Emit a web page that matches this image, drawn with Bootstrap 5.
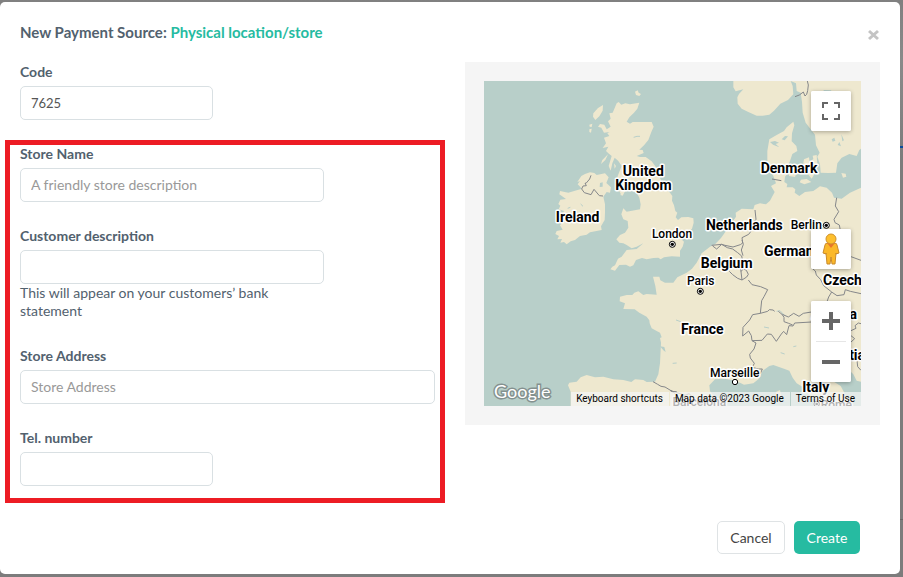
<!DOCTYPE html>
<html lang="en">
<head>
<meta charset="utf-8">
<meta name="viewport" content="width=device-width, initial-scale=1">
<title>New Payment Source</title>
<link href="https://cdn.jsdelivr.net/npm/bootstrap@5.3.0/dist/css/bootstrap.min.css" rel="stylesheet">
<style>
body{background:linear-gradient(#0a4a9c,#0a4a9c) 100% 146px/10px 2px no-repeat,linear-gradient(#666,#666) 100% 519px/10px 1px no-repeat,linear-gradient(#808080,#8a8a8a 60px,#7c7c7c 160px,#7c7c7c);font-family:Lato,sans-serif;font-size:14px;line-height:18px;color:#52616e;min-height:100vh;padding:2px 3px 2px 0}
.dialog-box{border:0;border-radius:5px;padding:0 20px 20px}
.dialog-head{height:60px;padding-top:20px}
.dialog-title{font-size:15px;line-height:20px;font-weight:700;color:#52616e;margin:0}
.dialog-title span{color:#26bba1}
.dismiss{border:0;background:none;padding:0;width:14px;height:14px;line-height:0;margin-top:6px}
.two-up{--bs-gutter-x:30px}
.form-label{font-weight:700;line-height:18px;margin-bottom:5px;display:block}
.form-control{font-size:13px;line-height:18px;height:34px;padding:7px 10px;border-color:#d9e0e3;border-radius:5px;color:#555}
.form-control::placeholder{color:#999;font-size:14px}
.field{margin-bottom:25px}
.field-first{padding-top:1px;margin-bottom:20px}
.w-short{max-width:193px}
.w-mid{max-width:304px}
.hint{max-width:260px;padding-bottom:2px}
.highlight{border:5px solid #ed1c24;margin:0 -10px 0 -15px;padding:0 5px 12px 10px}
.map-panel{background:#f5f5f5;padding:19px}
.map-view{height:325px;background:#b8cfc9;font-family:Roboto,sans-serif}
.map-view>svg{width:100%;height:100%;display:block}
.map-tools{top:10px;right:10px;bottom:24px;width:40px}
.map-btn{border:0;background:#fff;width:40px;height:40px;padding:0;display:flex;align-items:center;justify-content:center}
.map-card{background:#fff;border-radius:2px;box-shadow:0 1px 4px rgba(0,0,0,.3);overflow:hidden}
.map-person{margin-bottom:32px}
.map-rule{height:1px;margin:0 5px;background:#e6e6e6}
.map-legal{right:0;bottom:0;font-size:10px;line-height:14px;gap:1px}
.map-legal>*{background:rgba(245,245,245,.72);color:#000;border:0;padding:0 6px 0 5px;text-decoration:none;line-height:14px}
.country{font-size:42px;font-weight:700}
.city{font-size:36px;font-weight:500}
.map-names text{stroke:#fff;stroke-width:9px;stroke-linejoin:round;paint-order:stroke}
.map-logo{left:10px;bottom:3px;font:400 18px/24px Lato,sans-serif;color:#fff;-webkit-text-stroke:3px #84918f;paint-order:stroke fill}
.actions{padding:18px 20px 0 0;gap:9px}
.actions .btn{font-size:14px;line-height:18px;height:33px;padding:6px 11px;border-radius:5px}
.btn-plain{border:1px solid #dfe3e5;color:#444;background:#fff;width:68px}
.btn-make{background:#26bba1;color:#fff;width:66px}
</style>
<script src="https://cdn.jsdelivr.net/npm/bootstrap@5.3.0/dist/js/bootstrap.bundle.min.js"></script>
</head>
<body>
<main class="modal-content dialog-box bg-white">
  <header class="dialog-head d-flex justify-content-between align-items-start">
    <h1 class="dialog-title">New Payment Source: <span>Physical location/store</span></h1>
    <button type="button" class="dismiss" aria-label="Close"><svg width="14" height="14" viewBox="0 0 14 14"><path d="M3 3l9 8M12 3l-9 8" stroke="#c4c4c4" stroke-width="3"/></svg></button>
  </header>
  <form>
    <div class="row two-up">
      <div class="col-6">
        <div class="field-first">
          <label class="form-label" for="code">Code</label>
          <input class="form-control w-short" id="code" value="7625">
        </div>
        <div class="highlight">
          <div class="field">
            <label class="form-label" for="name">Store Name</label>
            <input class="form-control w-mid" id="name" placeholder="A friendly store description">
          </div>
          <div class="field">
            <label class="form-label" for="desc">Customer description</label>
            <input class="form-control w-mid" id="desc" aria-describedby="hint">
            <div class="hint" id="hint">This will appear on your customers’ bank statement</div>
          </div>
          <div class="field">
            <label class="form-label" for="addr">Store Address</label>
            <input class="form-control" id="addr" placeholder="Store Address">
          </div>
          <div>
            <label class="form-label" for="tel">Tel. number</label>
            <input class="form-control w-short" id="tel" type="tel">
          </div>
        </div>
      </div>
      <div class="col-6">
        <div class="map-panel">
          <div class="map-view position-relative overflow-hidden">
            <svg viewBox="12 15 1131 975" preserveAspectRatio="xMidYMid slice" role="img" aria-label="Map of western Europe">
              <g fill="#eee8cf">
                <path d="M410 82L416 78L424 86L436 82L450 85L478 80L472 98L462 110L448 124L440 137L450 143L458 138L515 138L521 152L514 168L505 192L492 208L478 221L488 222L491 231L470 240L480 243L497 243L515 256L530 276L537 300L552 330L570 350L577 360L576 374L582 388L586 405L592 410L587 424L594 432L604 424L625 423L640 427L641 440L636 458L622 472L618 484L604 490L612 497L608 512L600 524L600 542L575 541L552 544L542 550L535 545L520 546L500 550L486 546L468 552L460 568L450 572L438 566L418 567L405 584L391 580L397 572L405 568L414 548L425 542L440 522L470 519L490 502L470 512L455 517L440 507L430 502L418 500L409 490L420 477L435 470L445 455L443 435L430 430L424 415L430 397L440 407L480 400L482 385L478 365L470 350L440 338L430 345L424 357L415 340L410 330L413 300L425 270L415 255L404 245L397 262L392 284L386 270L395 240L385 232L378 225L385 212L368 216L378 202L372 185L388 180L382 172L389 168L372 170L364 155L354 152L360 144L373 146L380 160L392 152L384 136L392 128L388 112L398 110Z"/>
                <path d="M340 112L354 96L369 87L368 104L358 121L346 132L339 122ZM328 146L337 143L335 153L329 152ZM328 160L335 158L333 170L328 168ZM465 47L473 43L476 50L483 54L478 60L468 57ZM384 235L376 252L363 264L367 252ZM402 262L408 270L404 278ZM428 345L436 344L428 359L421 357Z"/>
                <path d="M293 325L300 315L292 318L304 300L315 294L330 289L343 291L350 297L375 292L386 304L379 321L393 334L390 350L380 348L370 362L375 385L375 410L374 432L363 451L365 462L330 469L320 476L300 480L285 492L272 496L260 505L252 498L241 500L246 489L232 490L237 480L226 474L230 465L248 461L240 448L256 428L240 425L252 405L236 400L241 389L235 384L241 371L258 369L238 355L240 345L265 350L285 344L306 338Z"/>
                <path d="M760 15L760 34L767 46L790 40L777 54L772 64L773 83L785 98L805 108L830 119L848 119L868 116L882 104L901 83L924 72L940 55L938 30L932 15Z"/>
                <path d="M932 15L948 22L950 45L962 50L966 78L968 110L977 140L992 160L1005 176L1008 208L1019 230L1012 242L1020 265L1022 290L1045 291L1068 290L1072 262L1085 245L1108 234L1130 240L1138 222L1143 218V15Z"/>
                <path d="M940 137L943 148L936 172L935 196L949 210L952 225L937 234L930 255L924 268L926 288L915 302L913 318L922 324L920 334L938 334L946 340L944 350L958 360L975 348L1000 345L1020 331L1040 335L1056 350L1062 365L1085 368L1110 350L1143 335V917L1130 914L1120 895L1110 885L1060 870L1042 890L1050 910L1082 930L1097 958L1114 990H1017L1004 970L985 955L973 936L950 922L938 905L928 884L912 878L880 867L868 870L848 884L835 910L820 922L792 926L780 920L755 912L733 908L705 910L688 928L690 946L702 960L680 975L640 990H272L272 947L264 928L268 920L290 917L302 904L320 897L345 904L370 902L400 910L430 912L454 918L465 910L490 912L500 918L525 917L535 895L540 862L543 800L540 786L545 784L540 770L530 765L515 757L509 742L508 733L500 722L478 710L464 700L430 699L435 682L419 676L420 662L440 657L457 657L463 650L475 646L490 657L500 654L530 656L526 630L519 602H538L541 613L555 620H580L592 604L620 590L636 578L650 560L665 532L690 512L705 505L723 486L745 455L768 422L767 410L785 398L820 400L824 387L840 382L858 385L870 374L884 348L873 330L888 322L880 300L868 282L862 262L862 225L868 190L890 177L912 165L920 154Z"/>
                <path d="M925 276L943 274L951 287L945 303L927 300ZM972 250L987 244L989 258L1000 249L998 239L1010 237L1012 267L996 276L1008 286L995 308L979 289L968 274ZM963 311L980 309L994 318L973 325L959 319ZM1084 291L1097 293L1099 302L1089 305ZM888 948L900 942L904 962L898 975L888 965Z"/>
              </g>
              <g fill="#b8cfc9">
                <path d="M360 321L368 319L368 332L359 333ZM870 198L885 195L897 200L887 204L898 214L879 206ZM905 190L915 180L924 181L914 193ZM1030 42L1053 43L1059 53L1043 60L1037 53ZM1084 175L1092 193L1087 196ZM1078 198L1083 211L1073 207ZM1055 190L1063 185L1066 194L1058 197ZM540 811L553 813L557 828L550 823Z"/>
              </g>
              <g fill="none" stroke="#b8cfc9" stroke-width="3">
                <path d="M461 184L471 181L480 181M302 384L309 391M263 397L271 394M720 575L722 580M890 706L900 704L915 720M852 753L867 756M578 862L590 861M902 830L914 834M940 812L949 810M588 732L602 737"/>
              </g>
              <g fill="none" stroke="#85878a" stroke-width="3" stroke-linejoin="round">
                <path d="M333 298L329 309L318 322L315 321L319 329L309 330L305 339L313 350L333 356L342 340L358 359L369 360M945 62L958 57L970 48L975 60L980 55L983 44L985 27L982 15M876 309L904 314M825 402L828 430L817 444L821 455L806 475L786 485L788 501L781 506L759 513L735 508L725 505L695 508M1070 365L1066 390L1076 407L1062 430L1065 440L1078 447L1081 463M519 917L533 925L543 931L555 933L578 947L590 947M570 943L615 958L627 953L642 967L667 970"/>
                <g transform="translate(570 492)">
                  <path d="M128 18L140 27L155 13L172 23L188 27L203 38L215 48L217 58L209 65L213 95L216 120M178 94L188 104L203 115L216 120L230 111L235 103L229 91L220 86L213 95M235 120L246 134L272 140L293 149L282 170L275 182L271 220L293 214L298 209L309 210L314 214M271 220L248 224L239 240L219 262L218 288L236 273L244 287L246 302L276 301L292 282L304 283L319 304L334 282L341 274L350 284L357 257L369 258L374 249L424 246M325 214L336 223L342 232L342 245L356 250L368 255M337 223L355 231L371 220L387 229L400 220L424 216M246 302L258 309L252 327L239 343L241 354L253 370L247 382L265 387L277 387L271 401M424 83L436 93L439 105L452 119L461 137L485 156L476 171L471 185L455 200L424 216M485 156L501 167L522 164L526 149L541 154L573 161M543 50L573 61M543 272L558 265L555 257L565 249L573 251M543 287L554 296L543 306M543 344L560 351L563 380L573 391M216 0L220 13L214 30L219 47M0 451L15 460"/>
                </g>
              </g>
              <g class="map-names" fill="#000">
                <g class="country" text-anchor="middle">
                  <text x="490" y="301">United</text><text x="490" y="343">Kingdom</text>
                  <text x="293" y="438">Ireland</text><text x="927" y="290">Denmark</text>
                  <text x="793" y="461">Netherlands</text><text x="740" y="575">Belgium</text>
                  <text x="667" y="775">France</text><text x="1007" y="949">Italy</text>
                </g>
                <g class="country">
                  <text x="852" y="539">Germany</text><text x="1029" y="628">Czechia</text>
                  <text x="1131" y="728" text-anchor="end">Austria</text><text x="1019" y="851">Croatia</text>
                </g>
                <g class="city" text-anchor="middle">
                  <text x="576" y="486">London</text><text x="979" y="460">Berlin</text>
                  <text x="662" y="628">Paris</text><text x="764" y="902">Marseille</text>
                  <text x="658" y="990">Barcelona</text><text x="1069" y="998">Rome</text>
                </g>
              </g>
              <g fill="#fff" stroke="#000" stroke-width="3">
                <circle cx="577" cy="505" r="9"/><circle cx="1039" cy="448" r="9"/><circle cx="661" cy="646" r="9"/><circle cx="765" cy="918" r="8"/><circle cx="1010" cy="984" r="8"/>
              </g>
              <g><circle cx="577" cy="505" r="5"/><circle cx="1039" cy="448" r="5"/><circle cx="661" cy="646" r="5"/><circle cx="1010" cy="984" r="4"/></g>
            </svg>
            <div class="map-logo position-absolute">Google</div>
            <div class="map-tools position-absolute d-flex flex-column">
              <div class="map-card mb-auto"><button type="button" class="map-btn" aria-label="Toggle fullscreen view"><svg width="18" height="18" viewBox="0 0 18 18"><path d="M1 6V1H6M12 1H17V6M17 12V17H12M6 17H1V12" fill="none" stroke="#666" stroke-width="2"/></svg></button></div>
              <div class="map-card map-person"><button type="button" class="map-btn" aria-label="Street View"><svg width="20" height="32" viewBox="0 0 20 32"><path d="M4 12Q4 10 7 10H13Q16 10 16 12L18 20L15 21V20L14 31H11L10 24L9 31H6L5 20V21L2 20Z" fill="#fbb829" stroke="#c98a2b"/><path d="M6 10H14L10 15Z" fill="#e9742b"/><circle cx="10" cy="6" r="5" fill="#fdbf2d" stroke="#cf922c"/></svg></button></div>
              <div class="map-card">
                <button type="button" class="map-btn" aria-label="Zoom in"><svg width="18" height="18" viewBox="0 0 18 18"><path d="M0 9H18M9 0V18" stroke="#666" stroke-width="4"/></svg></button>
                <div class="map-rule"></div>
                <button type="button" class="map-btn" aria-label="Zoom out"><svg width="18" height="18" viewBox="0 0 18 18"><path d="M0 9H18" stroke="#666" stroke-width="4"/></svg></button>
              </div>
            </div>
            <div class="map-legal position-absolute d-flex">
              <button type="button">Keyboard shortcuts</button><span>Map data ©2023 Google</span><a href="#">Terms of Use</a>
            </div>
          </div>
        </div>
      </div>
    </div>
    <div class="actions d-flex justify-content-end">
      <button type="button" class="btn btn-plain">Cancel</button>
      <button type="submit" class="btn btn-make">Create</button>
    </div>
  </form>
</main>
</body>
</html>
